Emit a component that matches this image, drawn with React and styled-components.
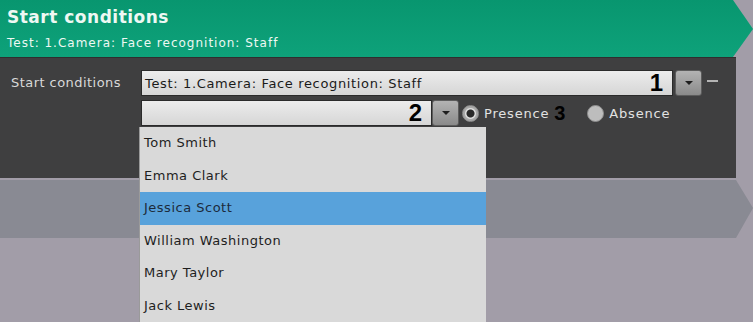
import styled, { createGlobalStyle } from "styled-components";

const GlobalStyle = createGlobalStyle`
  html, body {
    margin: 0;
    padding: 0;
    background: #a29da8;
  }
  body {
    font-family: "DejaVu Sans", Verdana, sans-serif;
    overflow: hidden;
  }
`;

const people = [
  "Tom Smith",
  "Emma Clark",
  "Jessica Scott",
  "William Washington",
  "Mary Taylor",
  "Jack Lewis",
];

const App = () => {
  return (
    <>
      <GlobalStyle />
      <Page>
        <Header>
          <Title>Start conditions</Title>
          <Subtitle>Test: 1.Camera: Face recognition: Staff</Subtitle>
        </Header>

        <Panel>
          <Label>Start conditions</Label>
          <Rows>
            <Row>
              <Field $width={532}>
                <span>Test: 1.Camera: Face recognition: Staff</span>
                <Marker $size={24}>1</Marker>
              </Field>
              <DropButton>
                <Arrow />
              </DropButton>
              <Dash />
            </Row>
            <Row>
              <Field $width={291}>
                <span />
                <Marker $size={24}>2</Marker>
              </Field>
              <DropButton $tight>
                <Arrow />
              </DropButton>
              <Radio $checked />
              <RadioLabel>Presence</RadioLabel>
              <Marker $size={20}>3</Marker>
              <Radio $gap />
              <RadioLabel>Absence</RadioLabel>
            </Row>
          </Rows>
        </Panel>

        <NextStep />

        <List>
          {people.map((name, i) => (
            <Item key={name} $active={i === 2}>
              {name}
            </Item>
          ))}
        </List>
      </Page>
    </>
  );
};

const Page = styled.div`
  position: relative;
  width: 753px;
  height: 322px;
`;

const Header = styled.div`
  height: 57px;
  width: 753px;
  box-sizing: border-box;
  padding: 6px 0 0 7px;
  background: linear-gradient(#08966f, #0ea27a);
  clip-path: polygon(0 0, 733px 0, 753px 29px, 733px 57px, 0 57px);
  color: #eef8f3;
`;

const Title = styled.div`
  font-size: 17px;
  font-weight: bold;
  line-height: 22px;
  letter-spacing: 0.5px;
`;

const Subtitle = styled.div`
  margin-top: 8px;
  font-size: 12px;
  line-height: 14px;
  letter-spacing: 1px;
`;

const Panel = styled.div`
  display: grid;
  grid-template-columns: 130px 1fr;
  width: 736px;
  height: 121px;
  box-sizing: border-box;
  padding: 12px 0 0 11px;
  background: #3f3f40;
  border-top: 1px solid #2f2f2f;
`;

const Label = styled.div`
  font-size: 13px;
  line-height: 26px;
  letter-spacing: 0.45px;
  color: #d9d9d9;
`;

const Rows = styled.div`
  display: flex;
  flex-direction: column;
  gap: 4px;
`;

const Row = styled.div`
  display: flex;
  align-items: center;
  height: 26px;
`;

const Field = styled.div`
  display: flex;
  align-items: center;
  justify-content: space-between;
  width: ${({ $width }) => $width}px;
  height: 26px;
  box-sizing: border-box;
  padding: 0 9px 0 3px;
  background: linear-gradient(#ececec, #d6d6d6);
  border: 1px solid #2a2a2a;
  font-size: 13px;
  color: #1a1a1a;
  letter-spacing: 0.65px;
`;

const Marker = styled.span`
  font-family: "Liberation Sans", Arial, sans-serif;
  font-weight: bold;
  font-size: ${({ $size }) => $size}px;
  letter-spacing: 0;
  line-height: 1;
  color: #000;
  margin-left: ${({ $size }) => ($size < 22 ? 5 : 0)}px;
`;

const DropButton = styled.div`
  display: flex;
  align-items: center;
  justify-content: center;
  width: 27px;
  height: 26px;
  margin-left: ${({ $tight }) => ($tight ? 0 : 2)}px;
  box-sizing: border-box;
  border-radius: 3px;
  border: 1px solid #5c5c5c;
  background: linear-gradient(#b3b3b3, #8a8a8a);
`;

const Arrow = styled.span`
  width: 0;
  height: 0;
  border-left: 4px solid transparent;
  border-right: 4px solid transparent;
  border-top: 4px solid #1e1e1e;
`;

const Dash = styled.span`
  width: 11px;
  height: 2px;
  margin: 0 0 4px 5px;
  background: #b4b4b4;
`;

const Radio = styled.span`
  width: 17px;
  height: 17px;
  box-sizing: border-box;
  border-radius: 50%;
  margin-left: ${({ $gap }) => ($gap ? 22 : 3)}px;
  background: #bdbdbd;
  border: 1px solid #8e8e8e;
  ${({ $checked }) =>
    $checked &&
    `
    background: radial-gradient(circle, #2a2a2a 0 3.5px, #dcdcdc 4.5px 5px, #a8a8a8 6px);
  `}
`;

const RadioLabel = styled.span`
  margin-left: 5px;
  font-size: 13px;
  letter-spacing: 0.8px;
  color: #e2e2e2;
`;

const NextStep = styled.div`
  margin-top: 2px;
  width: 753px;
  height: 58px;
  background: #898a93;
  clip-path: polygon(0 0, 736px 0, 753px 28px, 736px 58px, 0 58px);
  border-bottom: 1px solid #7a7a82;
`;

const List = styled.ul`
  position: absolute;
  left: 139px;
  top: 127px;
  width: 347px;
  margin: 0;
  padding: 0;
  list-style: none;
  background: #d9d9d9;
  border-left: 1px solid #9a9a9a;
  box-sizing: border-box;
`;

const Item = styled.li`
  height: 32.5px;
  line-height: 32.5px;
  padding-left: 4px;
  font-size: 13px;
  letter-spacing: 0.5px;
  color: ${({ $active }) => ($active ? "#1c2b3c" : "#1e1e1e")};
  background: ${({ $active }) => ($active ? "#58a2db" : "transparent")};
`;

export default App;
